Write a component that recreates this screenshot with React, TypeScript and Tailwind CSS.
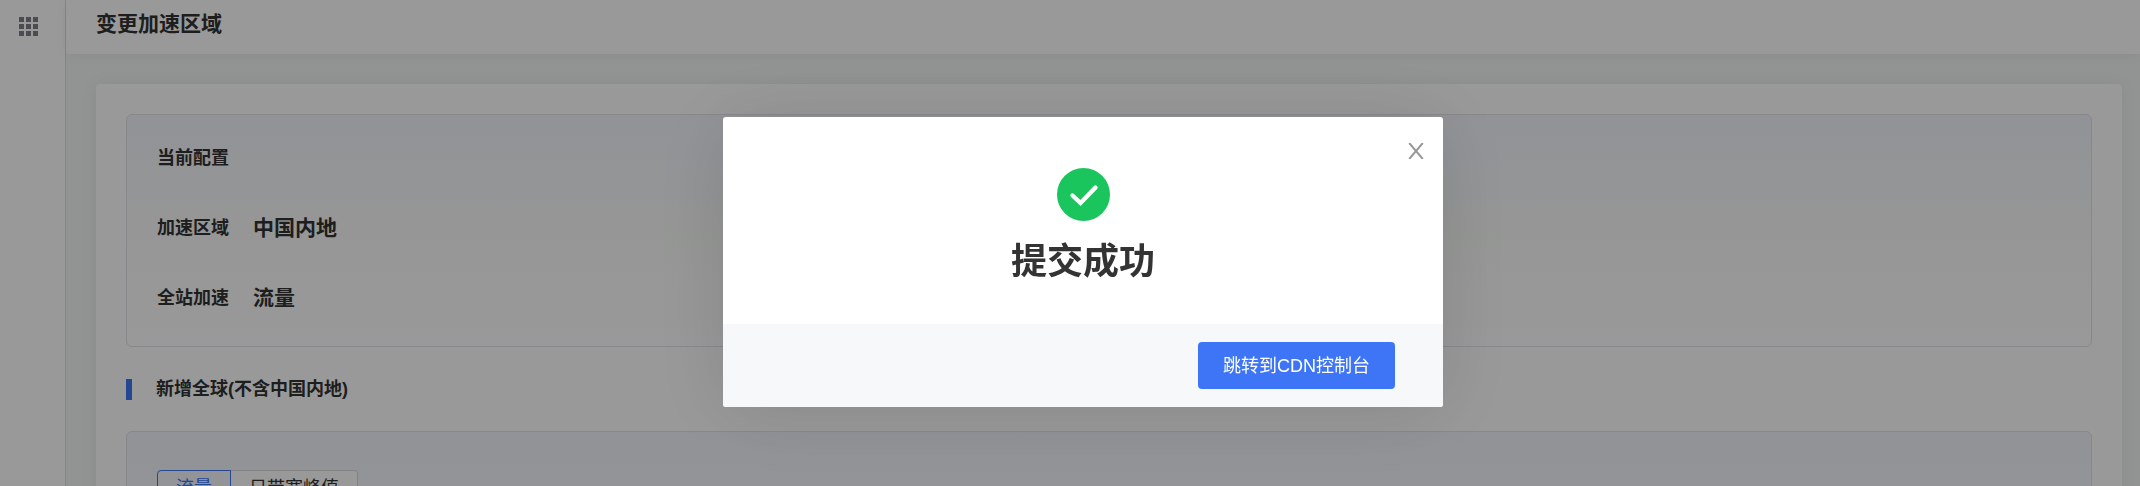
import { useState } from "react";

const currentConfig = [
  { label: "加速区域", value: "中国内地" },
  { label: "全站加速", value: "流量" },
];

const billingTypes = ["流量", "日带宽峰值"];

const GridIcon = () => (
  <svg width="19" height="19" viewBox="0 0 19 19" fill="#7d7d88" aria-hidden="true">
    {[0, 7, 14].map((y) =>
      [0, 7, 14].map((x) => <rect key={`${x}-${y}`} x={x} y={y} width="5" height="5" />)
    )}
  </svg>
);

const SuccessIcon = () => (
  <svg width="53" height="53" viewBox="0 0 53 53" fill="none" aria-hidden="true">
    <circle cx="26.5" cy="26.5" r="26.5" fill="#1bc55e" />
    <path d="M15.5 27.5 L23.5 35 L38.5 19.5" stroke="#fff" strokeWidth="4.4" strokeLinecap="round" strokeLinejoin="miter" />
  </svg>
);

const CloseIcon = () => (
  <svg width="16" height="16" viewBox="0 0 16 16" stroke="#999" strokeWidth="2" aria-hidden="true">
    <path d="M1.2 0 L14.8 16 M14.8 0 L1.2 16" />
  </svg>
);

const Sidebar = () => (
  <aside className="flex w-[66px] shrink-0 justify-center border-r border-[#dcdee2] bg-white pr-2 pt-4">
    <button type="button" aria-label="产品导航" className="flex h-5 items-center">
      <GridIcon />
    </button>
  </aside>
);

const BillingSwitch = () => {
  const [selected, setSelected] = useState(billingTypes[0]);

  return (
    <div className="flex">
      {billingTypes.map((type) => (
        <button
          key={type}
          type="button"
          onClick={() => setSelected(type)}
          className={
            type === selected
              ? "h-9 rounded-l border border-[#3d75f6] bg-[#f3f7fe] px-[18px] text-lg leading-6 text-[#3d75f6]"
              : "h-9 rounded-r border border-l-0 border-[#d9d9d9] bg-white px-[18px] text-lg leading-6"
          }
        >
          {type}
        </button>
      ))}
    </div>
  );
};

const SuccessDialog = ({ onClose }: { onClose: () => void }) => (
  <div className="fixed inset-0 flex items-start justify-center bg-black/40 pl-[26px] pt-[117px]">
    <div
      role="dialog"
      aria-modal="true"
      aria-labelledby="dialog-title"
      className="relative w-[720px] max-w-full overflow-hidden rounded-[3px] bg-white shadow-[0_4px_80px_rgba(0,0,0,0.12)]"
    >
      <button type="button" aria-label="关闭" onClick={onClose} className="absolute right-[19px] top-[26px]">
        <CloseIcon />
      </button>
      <div className="flex flex-col items-center gap-4 pb-[38px] pt-[51px]">
        <SuccessIcon />
        <h2 id="dialog-title" className="text-[36px] font-bold leading-[49px] text-[#333]">
          提交成功
        </h2>
      </div>
      <div className="flex justify-end bg-[#f6f8fa] px-12 py-[18px]">
        <button type="button" className="h-[47px] rounded bg-[#3d75f6] px-[25px] text-lg text-white">
          跳转到CDN控制台
        </button>
      </div>
    </div>
  </div>
);

const App = () => {
  const [open, setOpen] = useState(true);

  return (
    <div className="flex h-screen overflow-hidden bg-[#f3f7f5] font-['Liberation_Sans','Noto_Sans_CJK_SC',sans-serif] text-[#333]">
      <Sidebar />
      <div className="flex min-w-0 flex-1 flex-col">
        <header className="flex h-[54px] shrink-0 items-center rounded-bl bg-white px-[30px] pb-[6px] shadow-[0_2px_12px_rgba(0,0,0,0.05)]">
          <h1 className="text-[21px] font-bold leading-8">变更加速区域</h1>
        </header>

        <main className="flex-1 pl-[30px] pr-[18px] pt-[30px]">
          <div className="rounded bg-white p-[30px] shadow-[0_0_18px_rgba(0,0,0,0.06)]">
            <section className="rounded-md border border-[#e2e2ea] bg-linear-to-b from-[#f3f5fd] via-[#f9fbf9] to-white px-[30px] pb-8 pt-[29px]">
              <h2 className="text-lg font-bold leading-7">当前配置</h2>
              <dl className="flex flex-col gap-[38px] pt-10">
                {currentConfig.map((item) => (
                  <div key={item.label} className="flex items-center gap-6">
                    <dt className="text-lg font-bold leading-8">{item.label}</dt>
                    <dd className="text-[21px] font-bold leading-8">{item.value}</dd>
                  </div>
                ))}
              </dl>
            </section>

            <div className="flex items-center gap-6 py-7">
              <span className="h-[21px] w-[6px] bg-[#3d75f6]"></span>
              <h2 className="text-lg font-bold leading-7">新增全球(不含中国内地)</h2>
            </div>

            <section className="h-[320px] rounded-md border border-[#e2e2ea] bg-linear-to-b from-[#f3f5fd] via-[#f9fbf9] to-white px-[30px] pt-[38px]">
              <BillingSwitch />
            </section>
          </div>
        </main>
      </div>
      {open && <SuccessDialog onClose={() => setOpen(false)} />}
    </div>
  );
};

export default App;
